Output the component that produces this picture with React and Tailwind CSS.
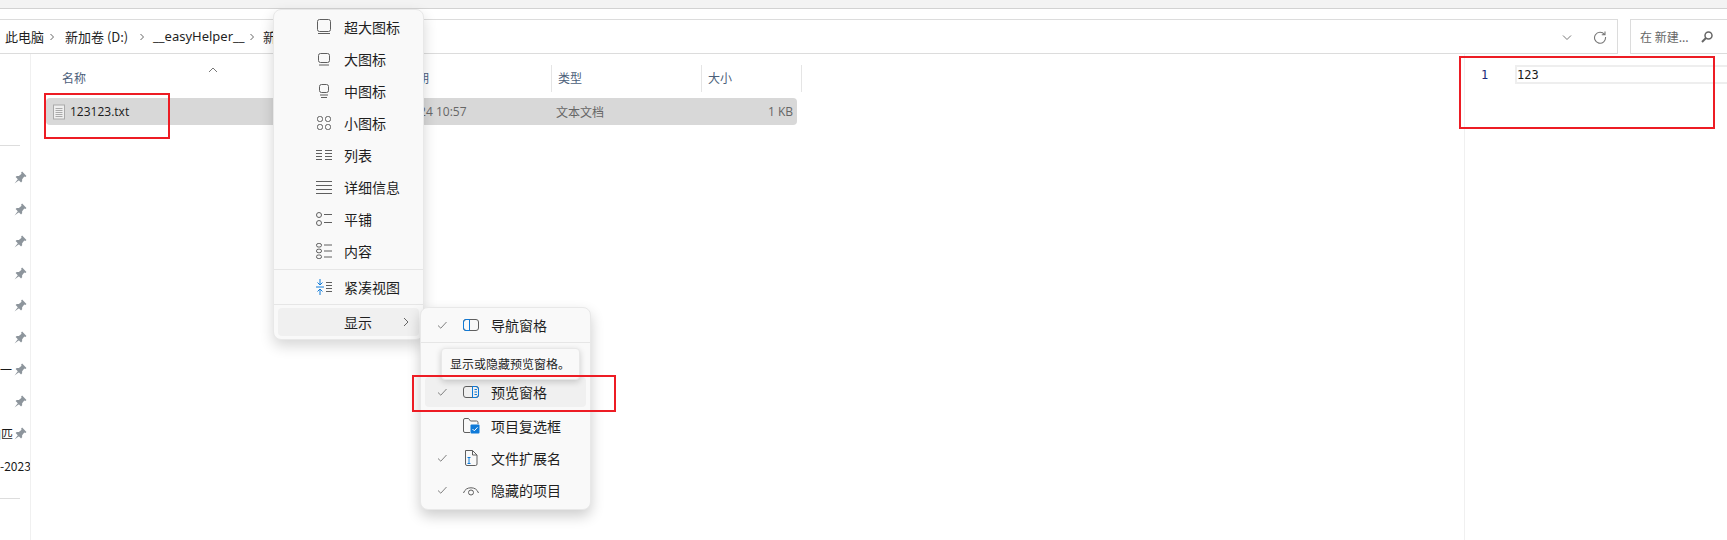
import React from "react";

const CJK = "font-['Noto_Sans_CJK_SC','Noto_Sans',sans-serif]";

const stroke = { fill: "none", stroke: "#5f5f5f", strokeWidth: 1 };
const blue = { fill: "none", stroke: "#0f7ad8", strokeWidth: 1 };

const Icon = ({ children }) => (
  <svg width="20" height="20" viewBox="0 0 20 20" className="shrink-0">
    {children}
  </svg>
);

const viewIcons = {
  xl: (
    <g {...stroke}>
      <rect x="3.500" y="2.500" width="13" height="12" rx="2" />
      <path d="M4 16.500h12" />
    </g>
  ),
  lg: (
    <g {...stroke}>
      <rect x="4.500" y="4.500" width="11" height="9" rx="2" />
      <path d="M5 16h10" />
    </g>
  ),
  md: (
    <g {...stroke}>
      <rect x="5.500" y="3.500" width="9" height="8" rx="2" />
      <path d="M6 14h8M7 16.500h6" />
    </g>
  ),
  sm: (
    <g {...stroke}>
      <rect x="3.500" y="3.500" width="5" height="5" rx="2" />
      <rect x="11.500" y="3.500" width="5" height="5" rx="2" />
      <rect x="3.500" y="11.500" width="5" height="5" rx="2" />
      <rect x="11.500" y="11.500" width="5" height="5" rx="2" />
    </g>
  ),
  list: (
    <g {...stroke}>
      <path d="M2 5.500h6M2 8.500h6M2 11.500h6M2 14.500h6M11 5.500h7M11 8.500h7M11 11.500h7M11 14.500h7" />
    </g>
  ),
  detail: (
    <g {...stroke}>
      <path d="M2 4.500h16M2 8.500h16M2 12.500h16M2 16.500h16" />
    </g>
  ),
  tile: (
    <g {...stroke}>
      <circle cx="5" cy="6" r="2.500" />
      <circle cx="5" cy="14" r="2.500" />
      <path d="M10 5.500h8M10 13.500h8" />
    </g>
  ),
  content: (
    <g {...stroke}>
      <rect x="2.500" y="2.500" width="5" height="3.500" rx="1.700" />
      <rect x="2.500" y="8.200" width="5" height="3.500" rx="1.700" />
      <rect x="2.500" y="14" width="5" height="3.500" rx="1.700" />
      <path d="M10 4h8M10 10h8M10 16h8" />
    </g>
  ),
  compact: (
    <g>
      <path {...blue} d="M2 10h8M6 2v6M3.500 5.500 6 8l2.500-2.500M6 18v-6M3.500 14.500 6 12l2.500 2.500" />
      <path {...stroke} d="M12 5.500h6M12 8.500h6M12 11.500h6M12 14.500h6" />
    </g>
  ),
};

const Check = () => (
  <svg width="12" height="12" viewBox="0 0 12 12" className="shrink-0">
    <path d="M2 6.500 4.800 9.200 10.500 3" fill="none" stroke="#808080" strokeWidth="1" />
  </svg>
);

const paneIcons = {
  nav: (
    <g>
      <rect x="2.500" y="4.500" width="15" height="11" rx="2.500" fill="none" stroke="#5f5f5f" />
      <path d="M8.500 4.500H5a2.500 2.500 0 0 0-2.500 2.500v6A2.500 2.500 0 0 0 5 15.500h3.500z" fill="none" stroke="#0f7ad8" />
    </g>
  ),
  preview: (
    <g>
      <rect x="2.500" y="4.500" width="15" height="11" rx="2.500" fill="none" stroke="#5f5f5f" />
      <path d="M11.500 4.500H15a2.500 2.500 0 0 1 2.500 2.500v6a2.500 2.500 0 0 1-2.500 2.500h-3.500z" fill="none" stroke="#0f7ad8" />
      <path d="M13.500 7.500h2.500M13.500 10h2.500M13.500 12.500h2.500" stroke="#0f7ad8" />
    </g>
  ),
  checkbox: (
    <g>
      <path d="M9 16.500H4A1.500 1.500 0 0 1 2.500 15V4A1.500 1.500 0 0 1 4 2.500h3.500l2 2.500h6A1.500 1.500 0 0 1 17 6.500V8" fill="none" stroke="#5f5f5f" />
      <rect x="9.500" y="8.500" width="9" height="9" rx="1" fill="#0f7ad8" />
      <path d="m11.500 13 1.800 1.800 3.200-3.500" fill="none" stroke="#fff" />
    </g>
  ),
  ext: (
    <g>
      <path d="M4.500 2.500h7l4.500 4.500v9A1.500 1.500 0 0 1 14.500 17.500h-8.500A1.500 1.500 0 0 1 4.500 16zM11.500 2.500V7H16" fill="none" stroke="#5f5f5f" />
      <path d="M6.500 9.500h3M6.500 15.500h3M8 9.500v6" fill="none" stroke="#0f7ad8" />
    </g>
  ),
  hidden: (
    <g fill="none" stroke="#5f5f5f">
      <path d="M2.500 13a8 8 0 0 1 15 0" />
      <circle cx="10" cy="12.500" r="2.500" />
    </g>
  ),
};

const Pin = () => (
  <svg width="13" height="13" viewBox="0 0 12 12">
    <path d="M7.500 0.500 11.500 4.500 10.500 5.500 9.500 5 7.500 7.500 7.500 9.500 6.500 10.500 1.500 5.500 2.500 4.500 4.500 4.500 7 2.500 6.500 1.500ZM3.500 7.500 0.500 11.500 4.500 8.500Z" fill="#8d959c" />
  </svg>
);

const Crumb = () => (
  <svg width="8" height="8" viewBox="0 0 8 8" className="shrink-0">
    <path d="M2.500 1 5.500 4 2.500 7" fill="none" stroke="#666" strokeWidth="1" />
  </svg>
);

const FileIcon = () => (
  <svg width="14" height="16" viewBox="0 0 14 16" className="shrink-0">
    <rect x="1.500" y="1" width="11" height="14" fill="#efefef" stroke="#aaaaaa" />
    <path d="M3.500 4.500h7M3.500 6.500h7M3.500 8.500h7M3.500 10.500h7M3.500 12.500h7" stroke="#aaaaaa" />
  </svg>
);

const Sidebar = () => {
  const rows = [
    ["", 1, ""],
    ["", 1, ""],
    ["", 1, ""],
    ["", 1, ""],
    ["", 1, ""],
    ["", 1, ""],
    ["一", 1, ""],
    ["", 1, ""],
    ["加匹", 1, "-ml-[11px]"],
    ["-2023", 0, ""],
  ];
  return (
    <aside className="w-[31px] shrink-0 border-r border-[#f0f0f0] flex flex-col pt-[91px] overflow-hidden">
      <div className="h-px w-5 bg-[#dddddd] mb-[16px]" />
      {rows.map(([label, pinned, offset], i) => (
        <div key={i} className="h-8 flex items-center relative whitespace-nowrap">
          <span className={`${CJK} ${offset} text-[12px] text-[#1a1a1a]`}>{label}</span>
          {pinned ? (
            <span className="absolute left-[14px] top-[9px] flex">
              <Pin />
            </span>
          ) : null}
        </div>
      ))}
      <div className="h-px w-5 bg-[#dddddd] mt-[16px]" />
    </aside>
  );
};

const ColHead = ({ className, children }) => (
  <div className={`${className} h-[27px] flex items-center pl-[6px] pb-[2px] border-r border-[#e5e5e5] text-[12px] text-[#4c607a] ${CJK}`}>
    {children}
  </div>
);

const ViewMenu = () => {
  const rows = [
    ["超大图标", "xl"],
    ["大图标", "lg"],
    ["中图标", "md"],
    ["小图标", "sm"],
    ["列表", "list"],
    ["详细信息", "detail"],
    ["平铺", "tile"],
    ["内容", "content"],
  ];
  return (
    <div className={`${CJK} absolute left-[273px] top-[9px] w-[151px] h-[331px] bg-[#f9f9f9] border border-[#e8e8e8] rounded-lg shadow-[0_6px_14px_rgba(0,0,0,0.16)] text-[14px] text-[#1f1f1f] pt-[1px]`}>
      {rows.map(([label, icon]) => (
        <div key={label} className="h-8 flex items-center pl-[40px] gap-[10px]">
          <Icon>{viewIcons[icon]}</Icon>
          <span>{label}</span>
        </div>
      ))}
      <div className="h-px bg-[#e6e6e6] mt-[2px]" />
      <div className="h-[34px] flex items-center pl-[40px] gap-[10px]">
        <Icon>{viewIcons.compact}</Icon>
        <span>紧凑视图</span>
      </div>
      <div className="h-px bg-[#e6e6e6]" />
      <div className="mx-[4px] mt-[3px] h-[28px] rounded bg-[#f0f0f0] flex items-center pl-[66px] relative">
        <span>显示</span>
        <svg width="8" height="10" viewBox="0 0 8 10" className="absolute left-[124px] top-[9px]">
          <path d="M2 1 6 5 2 9" fill="none" stroke="#666" />
        </svg>
      </div>
    </div>
  );
};

const ShowRow = ({ label, icon, checked, active, className = "" }) => (
  <div className={`${className} mx-[4px] rounded flex items-center ${active ? "h-[30px] bg-[#f0f0f0]" : "h-8"}`}>
    <span className="w-[11px]" />
    <span className="w-[12px] flex">{checked ? <Check /> : null}</span>
    <span className="ml-[13px] flex">
      <Icon>{paneIcons[icon]}</Icon>
    </span>
    <span className="ml-[10px]">{label}</span>
  </div>
);

const ShowMenu = () => (
  <div className={`${CJK} absolute left-[420px] top-[307px] w-[171px] h-[203px] bg-[#f9f9f9] border border-[#e8e8e8] rounded-lg shadow-[0_6px_14px_rgba(0,0,0,0.2)] text-[14px] text-[#1f1f1f] pt-[1px]`}>
    <ShowRow label="导航窗格" icon="nav" checked />
    <div className="h-px bg-[#e6e6e6] mt-[1px] mb-[34px]" />
    <ShowRow label="预览窗格" icon="preview" checked active />
    <ShowRow label="项目复选框" icon="checkbox" className="mt-[3px]" />
    <ShowRow label="文件扩展名" icon="ext" checked />
    <ShowRow label="隐藏的项目" icon="hidden" checked />
  </div>
);

const Tooltip = () => (
  <div className={`${CJK} absolute left-[441px] top-[348px] w-[139px] h-[32px] bg-[#f9f9f9] border border-[#e8e8e8] rounded shadow-[0_2px_6px_rgba(0,0,0,0.18)] flex items-center pl-[8px] text-[12px] text-[#1f1f1f] whitespace-nowrap`}>
    显示或隐藏预览窗格。
  </div>
);

const RedBox = ({ className }) => (
  <div className={`${className} absolute border-2 border-[#ed1c24] pointer-events-none`} />
);

export default function App() {
  return (
    <div className={`${CJK} relative w-[1727px] h-[540px] bg-white overflow-hidden flex flex-col`}>
      {/* window top */}
      <div className="h-[9px] shrink-0 bg-[#f3f3f3] border-b border-[#d2d2d2]" />
      <div className="h-[10px] shrink-0" />

      {/* address row */}
      <div className="h-[35px] shrink-0 flex text-[13px] text-[#1f1f1f]">
        <div className="w-[1618px] border-y border-r border-[#dcdcdc] flex items-center whitespace-nowrap pl-[5px]">
          <span className="w-[43px]">此电脑</span>
          <Crumb />
          <span className="ml-[9px] w-[73px]">新加卷 (D:)</span>
          <Crumb />
          <span className="ml-[7px] w-[91px] font-['Noto_Sans',sans-serif]">__easyHelper__</span>
          <span className="ml-[4px]"><Crumb /></span>
          <span className="ml-[7px]">新</span>
          <svg width="12" height="12" viewBox="0 0 12 12" className="ml-auto mr-[20px]">
            <path d="M2 4.500 6 8.500 10 4.500" fill="none" stroke="#777" />
          </svg>
          <svg width="14" height="14" viewBox="0 0 14 14" className="mr-[10px]">
            <path d="M11.500 4.500A5.500 5.500 0 1 0 12.500 7M12 1.500v3.200H8.800" fill="none" stroke="#777" strokeWidth="1.100" />
          </svg>
        </div>
        <div className="ml-[12px] flex-1 border-y border-l border-[#dcdcdc] flex items-center pl-[9px] text-[#666] text-[12px] whitespace-nowrap">
          <span>在 新建...</span>
          <svg width="14" height="14" viewBox="0 0 14 14" className="ml-[11px]">
            <circle cx="8.500" cy="5.500" r="3.500" fill="none" stroke="#666" strokeWidth="1.500" />
            <path d="M6 8 2 12" stroke="#666" strokeWidth="2" />
          </svg>
        </div>
      </div>

      {/* body */}
      <div className="flex-1 flex min-h-0">
        <Sidebar />

        <main className="flex-1 min-w-0 pt-[11px] relative">
          <svg width="12" height="8" viewBox="0 0 12 8" className="absolute left-[176px] top-[12px]">
            <path d="M2 6 6 2 10 6" fill="none" stroke="#777" />
          </svg>
          <div className="flex h-[27px]">
            <div className="w-[25px]" />
            <ColHead className="w-[319px] !border-r-0">名称</ColHead>
            <ColHead className="w-[177px]">修改日期</ColHead>
            <ColHead className="w-[150px]">类型</ColHead>
            <ColHead className="w-[100px]">大小</ColHead>
          </div>
          <div className="mt-[6px] ml-[15px] w-[751px] h-[27px] bg-[#d8d8d8] rounded-sm flex items-center text-[12px] text-[#666]">
            <span className="ml-[6px]"><FileIcon /></span>
            <span className="ml-[4px] w-[305px] text-[#1a1a1a] font-['Open_Sans',sans-serif] text-[12px]">123123.txt</span>
            <span className="w-[181px] font-['Open_Sans',sans-serif] text-[12px] pl-[1px]">2024/1/24 10:57</span>
            <span className="w-[150px]">文本文档</span>
            <span className="flex-1 text-right pr-[4px] font-['Open_Sans',sans-serif]">1 KB</span>
          </div>
        </main>

        {/* preview pane */}
        <section className="w-[263px] shrink-0 border-l border-[#f0f0f0] pt-[11px] pl-[16px]">
          <div className="flex h-[19px] items-center font-['DejaVu_Sans_Mono',monospace] text-[12px] leading-none">
            <span className="w-[34px] text-[#1c2a7a]">1</span>
            <span className="flex-1 h-[19px] border-2 border-r-0 border-[#eeeeee] flex items-center text-[#1a1a1a]">123</span>
          </div>
        </section>
      </div>

      <ViewMenu />
      <ShowMenu />
      <Tooltip />

      <RedBox className="left-[44px] top-[93px] w-[126px] h-[46px]" />
      <RedBox className="left-[412px] top-[375px] w-[204px] h-[37px]" />
      <RedBox className="left-[1459px] top-[56px] w-[256px] h-[73px]" />
    </div>
  );
}
